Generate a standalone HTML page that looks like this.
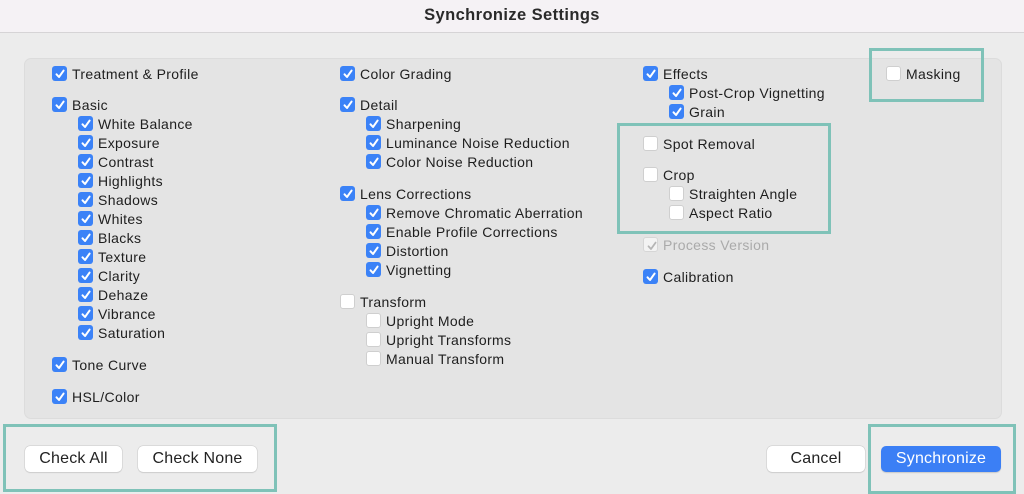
<!DOCTYPE html>
<html><head><meta charset="utf-8"><style>
*{margin:0;padding:0;box-sizing:border-box}
body{width:1024px;height:492px;background:#ececec;font-family:"Liberation Sans",sans-serif;font-size:14px;letter-spacing:0.35px;color:#1e1e1e;position:relative;overflow:hidden}
.title{position:absolute;left:0;top:0;width:1024px;height:33px;background:#f5f2f5;border-bottom:1px solid #d6d4d6;text-align:center;font-weight:bold;font-size:16.5px;letter-spacing:0.4px;line-height:31px;color:#2a2a2a}
.panel{position:absolute;left:24px;top:58px;width:978px;height:361px;background:#e4e4e4;border:1px solid #dcdcdc;border-radius:7px}
.i{position:absolute;height:16px;line-height:16px;white-space:nowrap}
.cb{position:absolute;left:0;top:0;width:15px;height:15px;border-radius:3px;background:#3b82f7}
.cb svg{position:absolute;left:1.5px;top:1.5px}
.u{background:#fff;border:1px solid #cfcfcf}
.d{background:#f3f3f3;border:1px solid #d6d6d6}
.t{position:absolute;left:20px;top:0}
.teal{position:absolute;border:3px solid #7fc2b8}
.btn{position:absolute;top:446px;height:26px;background:#fff;border-radius:5px;box-shadow:0 0 0 0.5px #c8c8c8,0 1px 1px rgba(0,0,0,.12);text-align:center;line-height:26px;font-size:16px;letter-spacing:0.2px;color:#222}
</style></head><body>
<div class="title">Synchronize Settings</div>
<div class="panel"></div>
<div id="items"></div>
<div class="teal" style="left:869px;top:48px;width:115px;height:54px"></div>
<div class="teal" style="left:617px;top:123px;width:214px;height:111px"></div>
<div class="teal" style="left:3px;top:424px;width:274px;height:68px"></div>
<div class="teal" style="left:868px;top:424px;width:148px;height:70px"></div>
<div class="btn" style="left:25px;width:97px">Check All</div>
<div class="btn" style="left:138px;width:119px">Check None</div>
<div class="btn" style="left:767px;width:98px">Cancel</div>
<div class="btn" style="left:881px;width:120px;background:#3b7ff5;color:#fff;box-shadow:0 1px 1px rgba(0,0,0,.15)">Synchronize</div>
<script>
var C='<svg width="12" height="12" viewBox="0 0 12 12"><path d="M2.5 6.3 L5 9 L9.6 2.6" fill="none" stroke="#fff" stroke-width="2" stroke-linecap="round" stroke-linejoin="round"/></svg>';
var D='<svg width="12" height="12" viewBox="0 0 12 12"><path d="M2.5 6.3 L5 9 L9.6 2.6" fill="none" stroke="#b5b5b5" stroke-width="1.8" stroke-linecap="round" stroke-linejoin="round"/></svg>';
var L=[
[52,73,1,"Treatment & Profile"],[52,104,1,"Basic"],[78,123,1,"White Balance"],[78,142,1,"Exposure"],[78,161,1,"Contrast"],[78,180,1,"Highlights"],[78,199,1,"Shadows"],[78,218,1,"Whites"],[78,237,1,"Blacks"],[78,256,1,"Texture"],[78,275,1,"Clarity"],[78,294,1,"Dehaze"],[78,313,1,"Vibrance"],[78,332,1,"Saturation"],[52,364,1,"Tone Curve"],[52,396,1,"HSL/Color"],
[340,73,1,"Color Grading"],[340,104,1,"Detail"],[366,123,1,"Sharpening"],[366,142,1,"Luminance Noise Reduction"],[366,161,1,"Color Noise Reduction"],[340,193,1,"Lens Corrections"],[366,212,1,"Remove Chromatic Aberration"],[366,231,1,"Enable Profile Corrections"],[366,250,1,"Distortion"],[366,269,1,"Vignetting"],[340,301,0,"Transform"],[366,320,0,"Upright Mode"],[366,339,0,"Upright Transforms"],[366,358,0,"Manual Transform"],
[643,73,1,"Effects"],[669,92,1,"Post-Crop Vignetting"],[669,111,1,"Grain"],[643,143,0,"Spot Removal"],[643,174,0,"Crop"],[669,193,0,"Straighten Angle"],[669,212,0,"Aspect Ratio"],[643,244,2,"Process Version"],[643,276,1,"Calibration"],[886,73,0,"Masking"]];
var h='';L.forEach(function(a){var cls=a[2]==1?'cb':a[2]==0?'cb u':'cb d';var ic=a[2]==1?C:a[2]==2?D:'';
h+='<div class="i" style="left:'+a[0]+'px;top:'+(a[1]-7)+'px"><div class="'+cls+'">'+ic+'</div><span class="t"'+(a[2]==2?' style="color:#aaa"':'')+'>'+a[3].replace('&','&amp;')+'</span></div>';});
document.getElementById('items').innerHTML=h;
</script>
</body></html>
